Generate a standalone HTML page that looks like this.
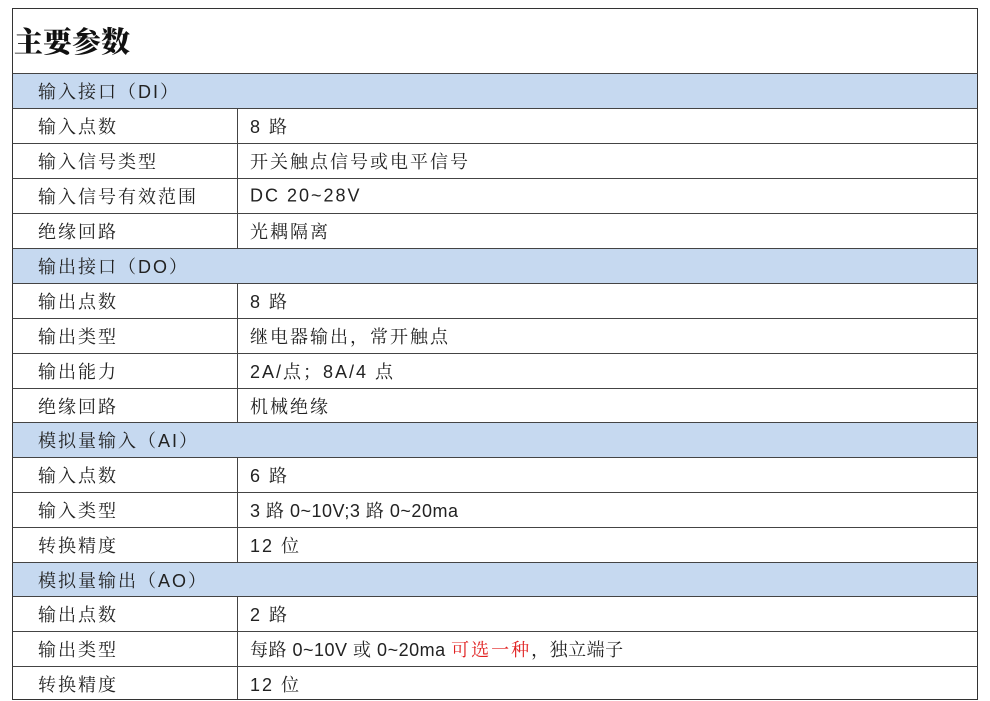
<!DOCTYPE html>
<html><head><meta charset="utf-8"><style>
body{margin:0;width:990px;height:701px;background:#fff;overflow:hidden;font-family:"Liberation Sans","Noto Serif CJK SC",serif;}
.t{position:absolute;left:12px;top:8px;width:964px;height:691px;border:1.5px solid #333;border-bottom:none;}
.title{position:absolute;left:14px;top:20px;font-size:29px;font-weight:900;font-family:"Noto Serif CJK SC",serif;color:#111;}
.r{position:absolute;left:12px;width:966px;border-top:1.5px solid #444;border-left:1.5px solid #333;border-right:1.5px solid #333;box-sizing:border-box;font-size:18px;color:#222;}
.r.h{background:#c6d9f0;}
.r span{position:absolute;top:50%;transform:translateY(-50%);white-space:nowrap;letter-spacing:2px;}
.c1{left:25px;}
.c2{left:237px;}
.v{position:absolute;left:224px;top:0;bottom:0;border-left:1.5px solid #444;}
.red{color:#e02020;}
.bot{position:absolute;left:12px;width:966px;top:699px;border-top:1.5px solid #333;}
</style></head><body>
<div class="t"></div>
<div class="title">主要参数</div>
<div class="r h" style="top:73px;height:35px"><span class="c1">输入接口（DI）</span></div>
<div class="r" style="top:108px;height:35px"><div class="v"></div><span class="c1">输入点数</span><span class="c2">8 路</span></div>
<div class="r" style="top:143px;height:35px"><div class="v"></div><span class="c1">输入信号类型</span><span class="c2">开关触点信号或电平信号</span></div>
<div class="r" style="top:178px;height:35px"><div class="v"></div><span class="c1">输入信号有效范围</span><span class="c2">DC  20~28V</span></div>
<div class="r" style="top:213px;height:35px"><div class="v"></div><span class="c1">绝缘回路</span><span class="c2">光耦隔离</span></div>
<div class="r h" style="top:248px;height:35px"><span class="c1">输出接口（DO）</span></div>
<div class="r" style="top:283px;height:35px"><div class="v"></div><span class="c1">输出点数</span><span class="c2">8 路</span></div>
<div class="r" style="top:318px;height:35px"><div class="v"></div><span class="c1">输出类型</span><span class="c2">继电器输出，常开触点</span></div>
<div class="r" style="top:353px;height:35px"><div class="v"></div><span class="c1">输出能力</span><span class="c2">2A/点；8A/4 点</span></div>
<div class="r" style="top:388px;height:34px"><div class="v"></div><span class="c1">绝缘回路</span><span class="c2">机械绝缘</span></div>
<div class="r h" style="top:422px;height:35px"><span class="c1">模拟量输入（AI）</span></div>
<div class="r" style="top:457px;height:35px"><div class="v"></div><span class="c1">输入点数</span><span class="c2">6 路</span></div>
<div class="r" style="top:492px;height:35px"><div class="v"></div><span class="c1">输入类型</span><span class="c2" style="letter-spacing:0.5px">3 路 0~10V;3 路 0~20ma</span></div>
<div class="r" style="top:527px;height:35px"><div class="v"></div><span class="c1">转换精度</span><span class="c2">12 位</span></div>
<div class="r h" style="top:562px;height:34px"><span class="c1">模拟量输出（AO）</span></div>
<div class="r" style="top:596px;height:35px"><div class="v"></div><span class="c1">输出点数</span><span class="c2">2 路</span></div>
<div class="r" style="top:631px;height:35px"><div class="v"></div><span class="c1">输出类型</span><span class="c2" style="letter-spacing:0.5px">每路 0~10V 或 0~20ma <span class="red" style="position:static;transform:none">可选一种</span>，独立端子</span></div>
<div class="r" style="top:666px;height:34px"><div class="v"></div><span class="c1">转换精度</span><span class="c2">12 位</span></div>
<div class="bot"></div>
</body></html>
